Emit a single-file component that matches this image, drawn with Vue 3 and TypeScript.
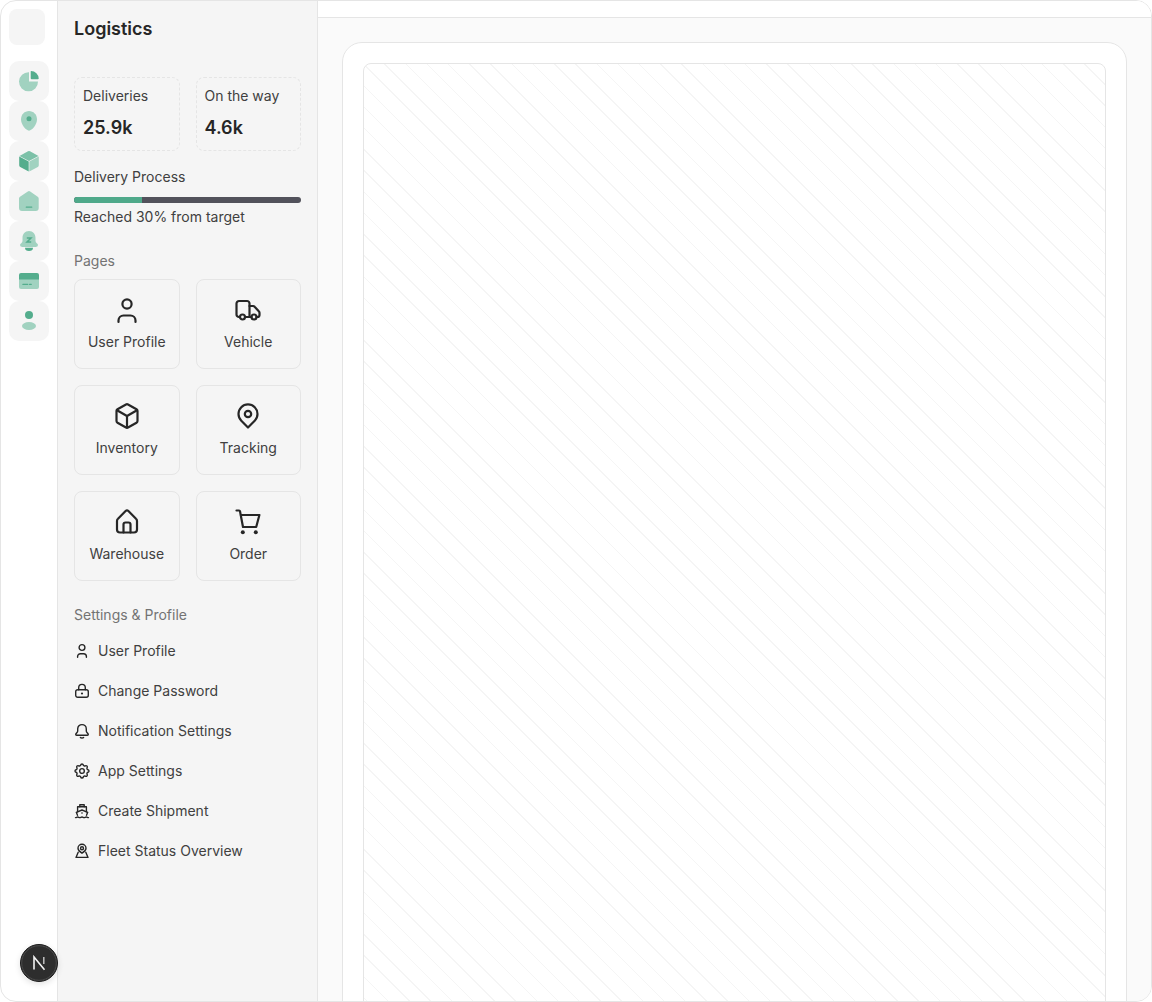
<script setup lang="ts">
interface Stat { label: string; value: string }
interface IconLink { label: string; paths: string[]; circles: number[][]; dots?: number[][]; box?: string }

const stats: Stat[] = [
  { label: 'Deliveries', value: '25.9k' },
  { label: 'On the way', value: '4.6k' },
]

const pages: IconLink[] = [
  { label: 'User Profile', paths: ['M5.500 26v-1.500a5 5 0 0 1 5-5h7a5 5 0 0 1 5 5V26'], circles: [[14, 8, 4.600]] },
  { label: 'Vehicle', paths: ['M6 21H5a2.500 2.500 0 0 1-2.500-2.500V7.500A2.500 2.500 0 0 1 5 5h8a2.500 2.500 0 0 1 2.500 2.500V21', 'M11 21h6.500', 'M15.500 10h3.600a2 2 0 0 1 1.500.7l4.200 4.600a2 2 0 0 1 .7 1.500V19a2 2 0 0 1-2 2h-1'], circles: [[8.500, 21, 2.500], [20, 21, 2.500]] },
  { label: 'Inventory', paths: ['M13 2.500a2 2 0 0 1 2 0l8.500 4.800a2 2 0 0 1 1 1.700v10a2 2 0 0 1-1 1.700l-8.500 4.800a2 2 0 0 1-2 0l-8.500-4.800a2 2 0 0 1-1-1.700V9a2 2 0 0 1 1-1.700z', 'M4 8.200L14 14l10-5.800', 'M14 14v11.500'], circles: [] },
  { label: 'Tracking', paths: ['M14 25.500l-6.700-6.800a9.500 9.500 0 1 1 13.400 0z'], circles: [[14, 12, 3.200]] },
  { label: 'Warehouse', paths: ['M12.600 3a2 2 0 0 1 2.800 0l7.600 7.700a3 3 0 0 1 1 2.200v8.600a3 3 0 0 1-3 3H7a3 3 0 0 1-3-3V12.900a3 3 0 0 1 1-2.200z', 'M10.500 24.500V16.500a2 2 0 0 1 2-2h3a2 2 0 0 1 2 2v8'], circles: [] },
  { label: 'Order', paths: ['M2.500 2.500H5a1 1 0 0 1 1 .8L9 19H22.200L25.400 7H6.500'], circles: [], dots: [[8.800, 24.300, 2], [21.800, 24.300, 2]] },
]

const settings: IconLink[] = [
  { label: 'User Profile', paths: ['M3.600 14.200v-.7a2.800 2.800 0 0 1 2.800-2.800h3.200a2.800 2.800 0 0 1 2.800 2.800v.7'], circles: [[8, 4.500, 2.900]] },
  { label: 'Change Password', paths: ['M1.700 8.700a2 2 0 0 1 2-2h8.600a2 2 0 0 1 2 2v3.600a2 2 0 0 1-2 2H3.700a2 2 0 0 1-2-2z', 'M4.700 6.700V4.700a3.300 3.300 0 0 1 6.600 0v2'], circles: [], dots: [[8, 10.500, 1.100]] },
  { label: 'Notification Settings', paths: ['M8 1.600a4.300 4.300 0 0 0-4.300 4.300v2.100c0 1.500-2 2.500-2 3.600q0 .6.8.6h11q.8 0 .8-.6c0-1.100-2-2.100-2-3.600V5.900A4.300 4.300 0 0 0 8 1.600z', 'M6.400 14.500c.5.600 2.700.6 3.200 0'], circles: [] },
  { label: 'App Settings', box: '1.700 1.700 20.600 20.600', paths: ['M10.325 4.317c.426-1.756 2.924-1.756 3.350 0a1.724 1.724 0 0 0 2.573 1.066c1.543-.94 3.310.826 2.370 2.370a1.724 1.724 0 0 0 1.065 2.572c1.756.426 1.756 2.924 0 3.350a1.724 1.724 0 0 0-1.066 2.573c.94 1.543-.826 3.310-2.370 2.370a1.724 1.724 0 0 0-2.572 1.065c-.426 1.756-2.924 1.756-3.350 0a1.724 1.724 0 0 0-2.573-1.066c-1.543.94-3.310-.826-2.370-2.370a1.724 1.724 0 0 0-1.065-2.572c-1.756-.426-1.756-2.924 0-3.350a1.724 1.724 0 0 0 1.066-2.573c-.94-1.543.826-3.310 2.370-2.370c1 .608 2.296.07 2.572-1.065z'], circles: [[12, 12, 3]] },
  { label: 'Create Shipment', paths: ['M1.500 14.600c1.100 0 1.100-.6 2.200-.6s1.100.6 2.100.6 1.100-.6 2.200-.6 1.100.6 2.100.6 1.100-.6 2.200-.6 1.100.6 2.200.6', 'M3.500 12.300L2.300 9.300 8 7l5.700 2.300-1.200 3', 'M3.600 8.700V3.800h8.800v4.900', 'M5.800 3.800V1.800h4.400v2'], circles: [], dots: [[8, 10, .8]] },
  { label: 'Fleet Status Overview', paths: ['M8 10.200c-2.600-1.600-4-3.200-4-5a4 4 0 1 1 8 0c0 1.800-1.400 3.400-4 5z', 'M4.200 9.200L2 14.400h12l-2.200-5.200'], circles: [[8, 5.200, 1.500]] },
]
</script>

<template>
  <div class="frame">
    <nav class="rail">
      <div class="logo-slot"></div>
      <div class="rail-icons">
        <div class="rail-btn">
          <svg viewBox="0 0 20 20" class="duo">
            <path class="light" d="M10 1.300V10.500H19A9.500 9.500 0 1 1 10 1.300Z" />
            <path class="dark" d="M12 0a7.700 7.700 0 0 1 7.700 7.600q0 .7-.8.7H12.700a1 1 0 0 1-1-1V.7q0-.7.300-.7Z" />
          </svg>
        </div>
        <div class="rail-btn">
          <svg viewBox="0 0 20 20" class="duo">
            <path class="light" d="M10 0C14.500 0 18 3.500 18 8.500C18 13.500 13 19.500 10 19.700C7 19.500 2 13.500 2 8.500C2 3.500 5.500 0 10 0Z" />
            <circle class="dark" cx="10" cy="7.700" r="2.500" />
          </svg>
        </div>
        <div class="rail-btn">
          <svg viewBox="0 0 20 20" class="duo">
            <path class="mid" d="M9 .3a2 2 0 0 1 2 0l8.500 4.700L10 10 .5 5Z" />
            <path class="dark" d="M.2 5.500 9.700 10.500V20.500L1.200 16a2 2 0 0 1-1-1.800Z" />
            <path class="light" d="M19.800 5.500 10.300 10.500V20.500L18.800 16a2 2 0 0 0 1-1.800Z" />
          </svg>
        </div>
        <div class="rail-btn">
          <svg viewBox="0 0 20 20" class="duo">
            <path class="light" d="M8.800.4a2 2 0 0 1 2.400 0l7.500 5.300a2 2 0 0 1 1 1.700V17a3 3 0 0 1-3 3H3a3 3 0 0 1-3-3V7.400a2 2 0 0 1 1-1.700Z" />
            <rect class="dark" x="6.700" y="15.500" width="6.600" height="1.300" rx=".5" />
          </svg>
        </div>
        <div class="rail-btn">
          <svg viewBox="0 0 20 20" class="duo">
            <path class="light" d="M10 0C14 0 16.500 3 16.500 7V10C16.500 12 19 12.500 19 14Q19 16 16.500 16H3.500Q1 16 1 14C1 12.500 3.500 12 3.500 10V7C3.500 3 6 0 10 0Z" />
            <path class="dark" d="M6 16.800h8a4 3.200 0 0 1-8 0Z" />
            <path class="z-mark" d="M7.800 7h4.200L8 11h4.200" />
          </svg>
        </div>
        <div class="rail-btn">
          <svg viewBox="0 0 20 20" class="duo">
            <path class="light" d="M0 6h20v10a2 2 0 0 1-2 2H2a2 2 0 0 1-2-2Z" />
            <path class="dark" d="M2 2h16a2 2 0 0 1 2 2V8.500H0V4a2 2 0 0 1 2-2Z" />
            <rect class="dark" x="3.300" y="12.800" width="6" height="1.200" rx=".5" />
            <rect class="dark" x="10" y="12.800" width="2.800" height="1.200" rx=".5" />
          </svg>
        </div>
        <div class="rail-btn">
          <svg viewBox="0 0 20 20" class="duo">
            <circle class="dark" cx="10" cy="4" r="4" />
            <ellipse class="light" cx="10" cy="15" rx="7" ry="4" />
          </svg>
        </div>
      </div>
    </nav>

    <aside class="sidebar">
      <h1 class="title">Logistics</h1>

      <div class="stats">
        <div v-for="s in stats" :key="s.label" class="stat">
          <div class="stat-label">{{ s.label }}</div>
          <div class="stat-value">{{ s.value }}</div>
        </div>
      </div>

      <div class="progress">
        <div class="progress-label">Delivery Process</div>
        <div class="bar"><div class="bar-fill" :style="{ width: '30%' }"></div></div>
        <div class="progress-label">Reached 30% from target</div>
      </div>

      <div class="section-label pages-label">Pages</div>
      <div class="pages">
        <a v-for="p in pages" :key="p.label" class="page-card">
          <svg viewBox="0 0 28 28" class="page-icon">
            <path v-for="d in p.paths" :key="d" :d="d" />
            <circle v-for="c in p.circles" :key="c.join()" :cx="c[0]" :cy="c[1]" :r="c[2]" />
            <circle v-for="c in p.dots" :key="c.join()" class="dot" :cx="c[0]" :cy="c[1]" :r="c[2]" />
          </svg>
          <span>{{ p.label }}</span>
        </a>
      </div>

      <div class="section-label settings-label">Settings &amp; Profile</div>
      <ul class="settings">
        <li v-for="s in settings" :key="s.label" class="setting">
          <svg :viewBox="s.box || '0 0 16 16'" class="setting-icon">
            <path v-for="d in s.paths" :key="d" :d="d" />
            <circle v-for="c in s.circles" :key="c.join()" :cx="c[0]" :cy="c[1]" :r="c[2]" />
            <circle v-for="c in s.dots" :key="c.join()" class="dot" :cx="c[0]" :cy="c[1]" :r="c[2]" />
          </svg>
          <span>{{ s.label }}</span>
        </li>
      </ul>
    </aside>

    <main class="main">
      <div class="topbar"></div>
      <div class="content">
        <div class="card">
          <div class="hatch"></div>
        </div>
      </div>
    </main>

    <div class="next-badge">
      <svg viewBox="0 0 38 38" width="38" height="38">
        <circle cx="19" cy="19" r="18.500" fill="#2d2d2d" stroke="#1c1c1c" />
        <circle cx="19" cy="19" r="17.300" fill="none" stroke="#4a4a4a" />
        <path d="M14 25.500V13L24.500 25.800" fill="none" stroke="#f2f2f2" stroke-width="1.600" />
        <path d="M23.800 13V20" fill="none" stroke="#c9c9c9" stroke-width="1.400" />
      </svg>
    </div>
  </div>
</template>

<style>
html, body { margin: 0; background: #fff; }
</style>

<style scoped>
* { box-sizing: border-box; }
.frame {
  position: relative;
  display: flex;
  width: 1152px;
  height: 1002px;
  overflow: hidden;
  background: #fff;
  border: 1px solid #e5e5e5;
  border-radius: 16px;
  font-family: Inter, "Liberation Sans", sans-serif;
  color: #262626;
  font-size: 14px;
  line-height: 20px;
}
.rail {
  flex: 0 0 57px;
  padding: 8px 8px 0;
  border-right: 1px solid #e5e5e5;
}
.logo-slot { width: 36px; height: 36px; border-radius: 8px; background: #f5f5f5; }
.rail-icons { margin-top: 16px; display: flex; flex-direction: column; }
.rail-btn {
  width: 40px; height: 40px; border-radius: 10px; background: #f5f5f5;
  display: flex; align-items: center; justify-content: center;
}
.duo { width: 20px; height: 20px; overflow: visible; }
.light { fill: #a1d2c0; }
.mid { fill: #7cc1a8; }
.dark { fill: #54ad8d; }
.z-mark { fill: none; stroke: #54ad8d; stroke-width: 1.500; }

.sidebar {
  flex: 0 0 260px;
  padding: 16px 16px 0;
  background: #f5f5f5;
  border-right: 1px solid #e5e5e5;
}
.title { margin: 0; font-size: 18px; line-height: 24px; font-weight: 600; color: #262626; }
.stats { margin-top: 36px; display: grid; grid-template-columns: 1fr 1fr; gap: 16px; }
.stat { height: 74px; padding: 8px; border: 1px dashed #e5e5e5; border-radius: 8px; }
.stat-label { color: #404040; }
.stat-value { margin-top: 10px; font-size: 18px; line-height: 24px; font-weight: 600; }
.progress { margin-top: 16px; }
.progress-label { color: #404040; }
.bar { height: 6px; margin: 10px 0 4px; background: #52525b; border-radius: 3px; overflow: hidden; }
.bar-fill { height: 100%; background: #4fa98a; }
.section-label { color: #737373; }
.pages-label { margin-top: 24px; }
.pages { margin-top: 8px; display: grid; grid-template-columns: 1fr 1fr; gap: 16px; }
.page-card {
  height: 90px; padding: 16px 0;
  border: 1px solid #e5e5e5; border-radius: 8px;
  display: flex; flex-direction: column; align-items: center; gap: 8px;
  color: #404040;
}
.page-icon {
  width: 28px; height: 28px; flex: none;
  fill: none; stroke: #262626; stroke-width: 2.200; stroke-linecap: round; stroke-linejoin: round;
}
.page-icon .dot, .setting-icon .dot { fill: #262626; stroke: none; }
.settings-label { margin-top: 24px; }
.settings { list-style: none; margin: 6px 0 0; padding: 0; }
.setting { height: 40px; display: flex; align-items: center; gap: 8px; color: #404040; }
.setting-icon {
  width: 16px; height: 16px; flex: none; overflow: visible;
  fill: none; stroke: #262626; stroke-linecap: round; stroke-linejoin: round;
}
.setting-icon path, .setting-icon circle { vector-effect: non-scaling-stroke; stroke-width: 1.400px; }

.main { flex: 1; min-width: 0; background: #fafafa; display: flex; flex-direction: column; }
.topbar { height: 17px; flex: none; background: #fff; border-bottom: 1px solid #e5e5e5; }
.content { padding: 24px; flex: none; }
.card { height: 1200px; padding: 20px; background: #fff; border: 1px solid #e5e5e5; border-radius: 20px; }
.hatch {
  height: 100%;
  border: 1px solid #e5e5e5;
  border-radius: 8px;
  background-image: repeating-linear-gradient(45deg, transparent 0, transparent 6.500px, #f5f5f5 6.500px, #f5f5f5 7.500px, transparent 7.500px, transparent 15px);
}
.next-badge {
  position: absolute; left: 19px; bottom: 19px; width: 38px; height: 38px;
  border-radius: 50%; box-shadow: 0 2px 6px rgba(0, 0, 0, .12);
}
.next-badge svg { display: block; }
</style>
